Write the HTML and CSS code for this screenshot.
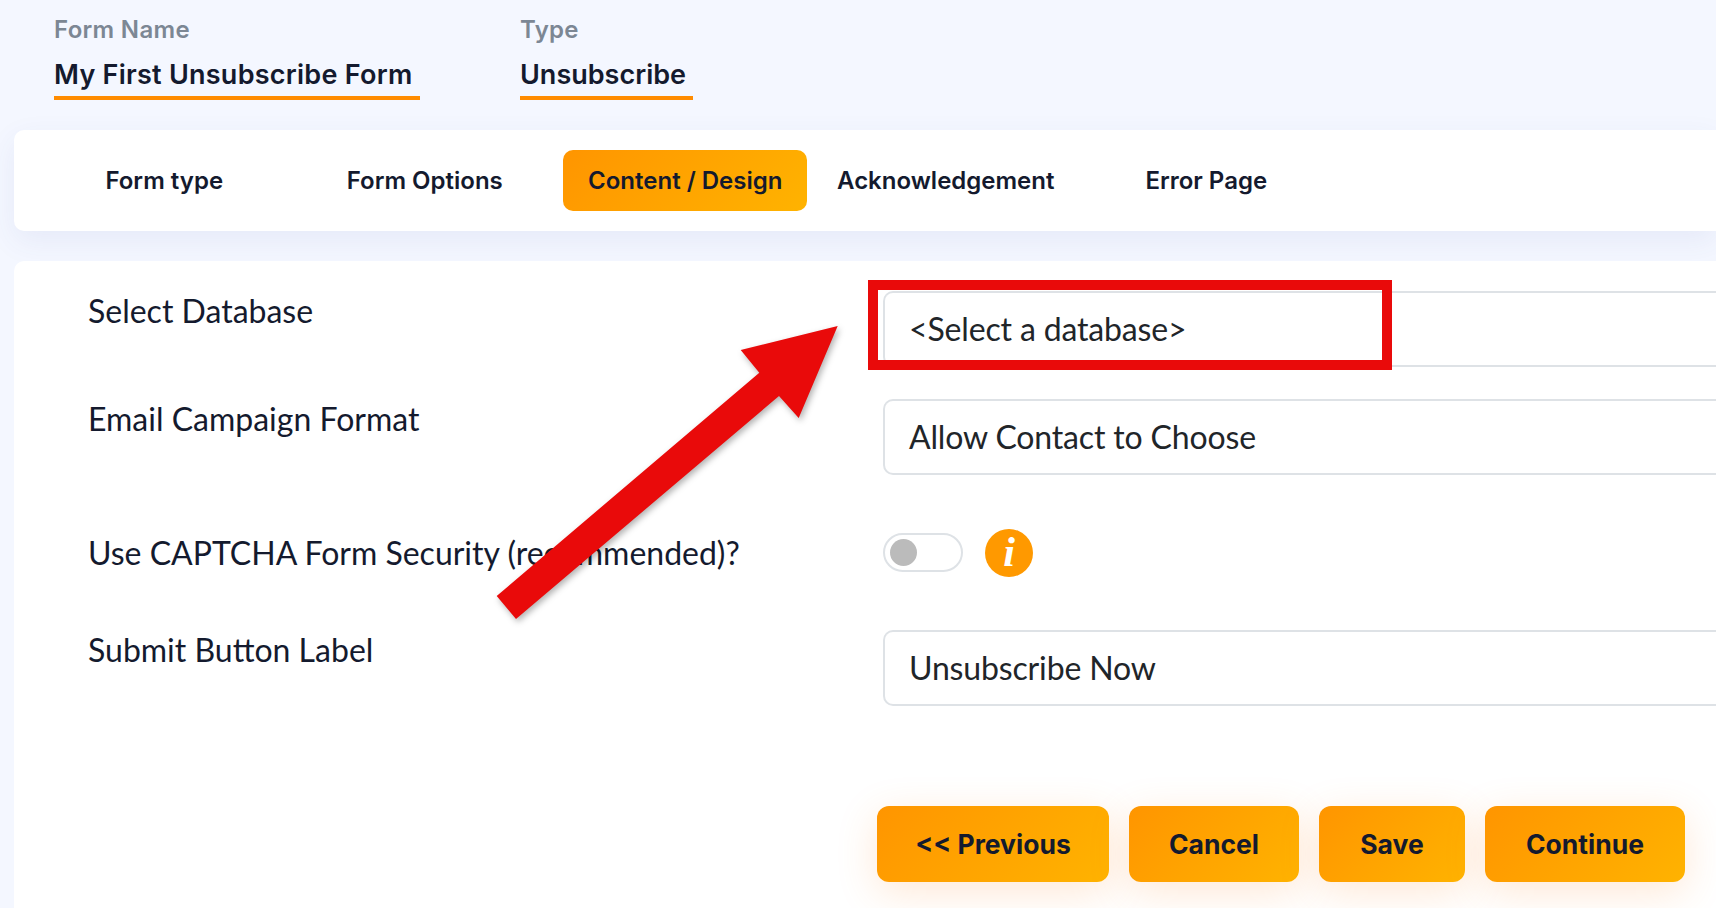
FILE: index.html
```html
<!DOCTYPE html>
<html>
<head>
<meta charset="UTF-8">
<title>Unsubscribe Form</title>
<link rel="stylesheet" href="styles.css">
</head>
<body>
    <div class="form-head">
        <div class="head-field name-field">
            <label>Form Name</label>
            <div class="head-value">My First Unsubscribe Form</div>
        </div>
        <div class="head-field type-field">
            <label>Type</label>
            <div class="head-value">Unsubscribe</div>
        </div>
    </div>

    <div class="tabs-card">
        <a class="tab">Form type</a>
        <a class="tab">Form Options</a>
        <a class="tab active">Content / Design</a>
        <a class="tab">Acknowledgement</a>
        <a class="tab">Error Page</a>
    </div>

    <div class="content-card">
        <div class="row">
            <div class="row-label">Select Database</div>
            <div class="input-box">&lt;Select a database&gt;</div>
        </div>
        <div class="row">
            <div class="row-label">Email Campaign Format</div>
            <div class="input-box">Allow Contact to Choose</div>
        </div>
        <div class="row captcha-row">
            <div class="row-label">Use CAPTCHA Form Security (recommended)?</div>
            <div class="toggle-wrap">
                <span class="toggle"><span class="knob"></span></span>
                <span class="info-icon">i</span>
            </div>
        </div>
        <div class="row">
            <div class="row-label">Submit Button Label</div>
            <div class="input-box">Unsubscribe Now</div>
        </div>
        <div class="buttons">
            <button class="btn btn-prev">&lt;&lt; Previous</button>
            <button class="btn btn-cancel">Cancel</button>
            <button class="btn btn-save">Save</button>
            <button class="btn btn-continue">Continue</button>
        </div>
    </div>

    <!-- annotation drawn on top of the screenshot -->
    <div class="mark-box"></div>
    <svg class="mark-arrow" width="1716" height="908" viewBox="0 0 1716 908">
        <polygon points="837.7,326 740.7,350 759.3,372.7 496.7,596 516,619 779,396 798.7,418" fill="#e90a0a"/>
    </svg>
</body>
</html>
```

FILE: styles.css
```css
* {
    box-sizing: border-box;
}
html, body {
    height: 908px;
    overflow: hidden;
}
body {
    margin: 0;
    padding: 0;
    position: relative;
    background: #f4f7ff;
    font-family: "Lato", sans-serif;
    color: #141a2e;
}

/* header fields */
.form-head {
    display: flex;
    height: 130px;
    padding: 17px 0 0 54px;
}
.head-field label {
    display: block;
    font-family: "Inter", sans-serif;
    font-weight: 600;
    font-size: 24px;
    letter-spacing: 0.3px;
    line-height: 26px;
    color: #7c8794;
}
.head-value {
    margin-top: 15px;
    height: 42px;
    font-family: "Inter", sans-serif;
    font-weight: 600;
    font-size: 27px;
    line-height: 34px;
    white-space: nowrap;
    border-bottom: 4px solid #ff8c00;
}
.name-field {
    width: 366px;
    margin-right: 100px;
}
.name-field .head-value {
    letter-spacing: 0.25px;
}
.type-field {
    width: 173px;
}

/* tabs */
.tabs-card {
    display: grid;
    grid-template-columns: repeat(5, 260.5px);
    justify-items: center;
    align-items: center;
    height: 101px;
    margin-left: 14px;
    padding-left: 20px;
    background: #fff;
    border-radius: 10px 0 0 10px;
    box-shadow: 0 10px 30px rgba(60, 80, 160, 0.08);
}
.tab {
    padding: 0 25px;
    height: 61px;
    line-height: 61px;
    font-family: "Inter", sans-serif;
    font-weight: 600;
    font-size: 24px;
    white-space: nowrap;
    border-radius: 10px;
}
.tab.active {
    background: linear-gradient(135deg, #ff9500, #ffb300);
}

/* main card */
.content-card {
    height: 647px;
    margin: 30px 0 0 14px;
    padding: 30px 0 0 74px;
    background: #fff;
    border-radius: 10px 0 0 0;
}
.row {
    display: flex;
    align-items: flex-start;
    margin-bottom: 32px;
}
.captcha-row {
    margin-top: 58px;
    margin-bottom: 58px;
}
.row-label {
    width: 795px;
    flex-shrink: 0;
    padding-top: 1px;
    font-size: 32px;
    line-height: 38px;
}
.input-box {
    flex: 1;
    height: 76px;
    padding-left: 24px;
    font-size: 32px;
    letter-spacing: -0.15px;
    line-height: 72px;
    color: #212529;
    border: 2px solid #dee2e6;
    border-right: none;
    border-radius: 10px 0 0 10px;
}
.toggle-wrap {
    display: flex;
    align-items: center;
    gap: 22px;
    height: 39px;
}
.toggle {
    display: flex;
    align-items: center;
    width: 80px;
    height: 39px;
    padding-left: 5px;
    border: 2px solid #dee2e6;
    border-radius: 20px;
}
.knob {
    width: 27px;
    height: 27px;
    border-radius: 50%;
    background: #bbb;
}
.info-icon {
    width: 48px;
    height: 48px;
    border-radius: 50%;
    background: #ff9900;
    color: #fff;
    text-align: center;
    font-family: "Liberation Serif", serif;
    font-style: italic;
    font-weight: bold;
    font-size: 42px;
    line-height: 46px;
}

/* bottom buttons */
.buttons {
    display: flex;
    gap: 20px;
    margin: 100px 0 0 789px;
}
.btn {
    height: 76px;
    padding: 0;
    border: none;
    border-radius: 12px;
    background: linear-gradient(135deg, #ff9500, #ffb300);
    box-shadow: 0 10px 40px rgba(255, 140, 50, 0.2);
    font-family: "Inter", sans-serif;
    font-weight: 700;
    font-size: 26.5px;
    color: #141a2e;
}
.btn-prev { width: 232px; }
.btn-cancel { width: 170px; }
.btn-save { width: 146px; }
.btn-continue { width: 200px; }

/* red annotation */
.mark-box {
    position: absolute;
    left: 868px;
    top: 280px;
    width: 524px;
    height: 90px;
    border: 10px solid #e90a0a;
}
.mark-arrow {
    position: absolute;
    left: 0;
    top: 0;
    filter: drop-shadow(2px 3px 3px rgba(0, 0, 0, 0.3));
}
```
